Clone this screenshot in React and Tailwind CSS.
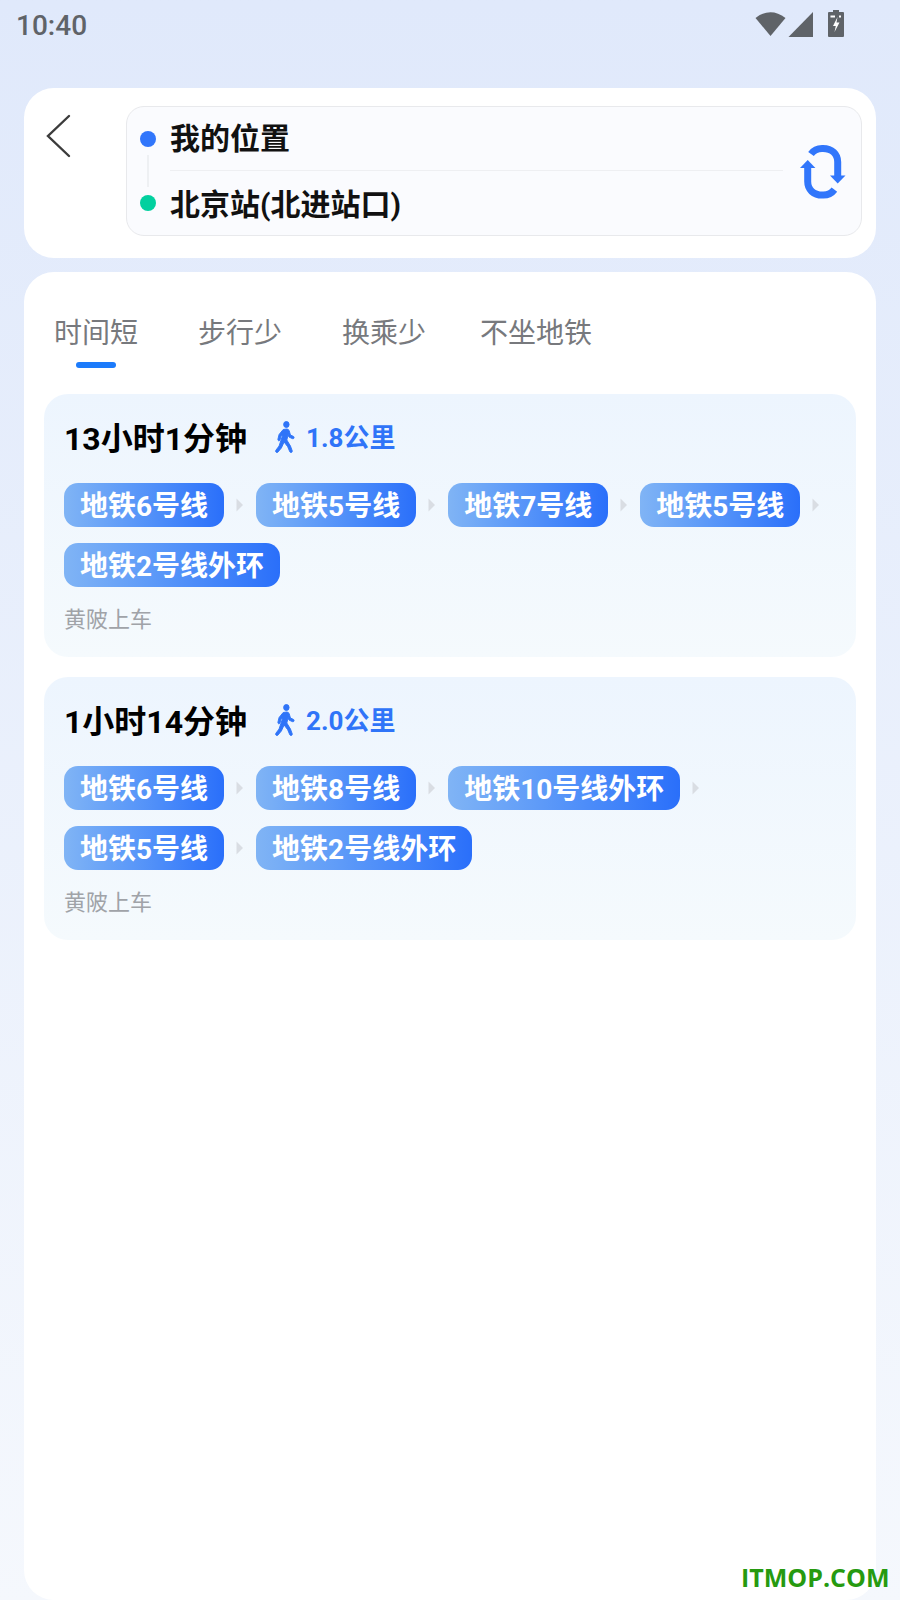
const cjk = { fontFamily: 'Roboto, "Noto Sans CJK SC", sans-serif' };

function Pill({ text }) {
  return (
    <span className="h-[44px] px-[16px] pt-[3px] rounded-[14px] flex items-center text-white font-bold text-[28px] leading-none bg-gradient-to-r from-[#80b4f5] to-[#2a6ffa] whitespace-nowrap">
      {text}
    </span>
  );
}

function Arrow() {
  return (
    <svg width="8" height="14" viewBox="0 0 8 14" className="mx-[12px] shrink-0">
      <path d="M0.5 0.5 L7 7 L0.5 13.5 Z" fill="#d9dde3" />
    </svg>
  );
}

function Walker() {
  return (
    <svg width="20" height="32" viewBox="0 0 22 32" fill="#2f74f8" stroke="#2f74f8" strokeWidth="1" strokeLinejoin="round" preserveAspectRatio="none">
      <circle cx="12.5" cy="3.5" r="3" />
      <path d="M9 8.5 L13 8 Q15 8 15.7 10 L17 14 L20.5 15.5 Q21.5 16.5 20.5 17.5 Q20 18 19 17.6 L15.3 16 L14.5 13.5 L13 19 L17 25 L19 30 Q19 31.5 17.5 31.5 Q16.7 31.5 16.3 30.8 L14 25.8 L10 21 L7 27 L3 31.3 Q2 32 1 31 Q0.4 30 1 29.2 L4.5 25 L8.5 14 L6.6 15.2 L5.5 19 Q5 20 4 19.8 Q3 19.4 3.2 18.2 L4.5 13.5 Z" />
    </svg>
  );
}

function RouteCard({ title, dist, rows }) {
  return (
    <div className="h-[263px] rounded-[24px] bg-gradient-to-b from-[#edf5fe] to-[#f5fafd] pl-[20px] pt-[21px]">
      <div className="flex items-center h-[44px]">
        <span className="text-[32px] pt-[4px] font-bold text-black leading-none w-[211px]">{title}</span>
        <Walker />
        <span className="ml-[11px] pt-[2px] text-[26px] font-bold text-[#2f74f8] leading-none">{dist}</span>
      </div>
      <div className="mt-[24px] flex flex-col gap-[16px]">
        {rows.map((row, i) => (
          <div key={i} className="flex items-center">
            {row.map((t, j) => (
              <div key={j} className="flex items-center">
                <Pill text={t} />
                {(j < row.length - 1 || i < rows.length - 1) && <Arrow />}
              </div>
            ))}
          </div>
        ))}
      </div>
      <div className="mt-[18px] text-[22px] leading-[30px] text-[#a0a3a8]">黄陂上车</div>
    </div>
  );
}

export default function App() {
  return (
    <div className="relative w-[900px] h-[1600px] overflow-hidden bg-gradient-to-b from-[#e0e9fb] to-[#f5f8fd] flex flex-col" style={cjk}>
      <div className="h-[88px] shrink-0 flex items-start justify-between pl-[16px] pr-[56px]">
        <span className="mt-[9px] text-[28px] leading-[34px] font-medium text-[#5f6368]">10:40</span>
        <div className="mt-[10px] flex items-start">
          <svg width="31" height="27" viewBox="0 0 31 27" fill="#5f6368">
            <path d="M0.5 8 Q15.5 -3.5 30.5 8 L15.5 26 Z" />
          </svg>
          <svg width="26" height="26" viewBox="0 0 26 26" fill="#5f6368" className="ml-[2px] mt-[1px]">
            <path d="M25 1 V26 H0.5 Z" />
          </svg>
          <svg width="16" height="27" viewBox="0 0 16 27" className="ml-[14px]">
            <path d="M5 0 H11 V2 H15 Q16 2 16 3 V26 Q16 27 15 27 H1 Q0 27 0 26 V3 Q0 2 1 2 H5 Z" fill="#5f6368" />
            <path d="M9.5 7 L5 16 H7.8 L6.5 22 L11.5 12.5 H8.5 Z" fill="#fff" />
            <path d="M2.5 5.5 H7 V7.5 H2.5 Z M11 5.5 H13 V7.5 H11 Z" fill="#fff" />
          </svg>
        </div>
      </div>

      <div className="mx-[24px] h-[170px] shrink-0 rounded-[30px] bg-white flex items-start pt-[18px] pr-[14px]">
        <div className="w-[102px] shrink-0 pl-[22px] pt-[8px]">
          <svg width="26" height="44" viewBox="0 0 26 44" fill="none" stroke="#3c3c3c" strokeWidth="2.4" strokeLinecap="round">
            <path d="M23 2 L2 22 L23 42" />
          </svg>
        </div>
        <div className="flex-1 h-[130px] rounded-[18px] border border-[#e8e9ec] bg-[#fafbfe] flex items-center pl-[13px] pr-[15px]">
          <div className="flex flex-col items-center w-[16px] shrink-0">
            <span className="w-[16px] h-[16px] rounded-full bg-[#3176fb]" />
            <span className="w-[2px] h-[32px] my-[8px] bg-[#eef0f3]" />
            <span className="w-[16px] h-[16px] rounded-full bg-[#02d09f]" />
          </div>
          <div className="flex-1 ml-[14px] flex flex-col">
            <div className="h-[64px] border-b border-[#eeeff2] flex items-center text-[30px] font-bold text-[#111] leading-none">我的位置</div>
            <div className="h-[64px] pt-[4px] flex items-center text-[30px] font-bold text-[#111] leading-none">北京站(北进站口)</div>
          </div>
          <svg width="46" height="54" viewBox="0 0 46 54" className="ml-[17px] mt-[2px] shrink-0">
            <g fill="none" stroke="#3176fb" strokeWidth="7">
              <path d="M11 9 C14 5 18 3.5 22 3.5 H23 C32 3.5 37.7 9 37.7 17 V32" />
              <path d="M11 9 C14 5 18 3.5 22 3.5 H23 C32 3.5 37.7 9 37.7 17 V32" transform="rotate(180 22.7 26.8)" />
            </g>
            <path d="M30 30.5 H45.5 L37.7 38.5 Z" fill="#3176fb" />
            <path d="M30 30.5 H45.5 L37.7 38.5 Z" fill="#3176fb" transform="rotate(180 22.7 26.8)" />
          </svg>
        </div>
      </div>

      <div className="mx-[24px] mt-[14px] flex-1 rounded-[30px] bg-white px-[20px]">
        <div className="h-[122px] flex items-start text-[28px] text-[#77797d] leading-none pt-[48px]">
          <div className="relative ml-[10px] w-[84px]">
            时间短
            <span className="absolute left-[22px] top-[42px] w-[40px] h-[6px] rounded-full bg-[#1c7bfb]" />
          </div>
          <span className="ml-[60px]">步行少</span>
          <span className="ml-[60px]">换乘少</span>
          <span className="ml-[54px]">不坐地铁</span>
        </div>
        <div className="flex flex-col gap-[20px]">
          <RouteCard
            title="13小时1分钟"
            dist="1.8公里"
            rows={[["地铁6号线", "地铁5号线", "地铁7号线", "地铁5号线"], ["地铁2号线外环"]]}
          />
          <RouteCard
            title="1小时14分钟"
            dist="2.0公里"
            rows={[["地铁6号线", "地铁8号线", "地铁10号线外环"], ["地铁5号线", "地铁2号线外环"]]}
          />
        </div>
      </div>

      <span className="absolute left-[741px] top-[1562px] text-[25px] leading-[30px] font-bold text-[#269a10]" style={{ fontFamily: '"Open Sans", sans-serif' }}>ITMOP.COM</span>
    </div>
  );
}
